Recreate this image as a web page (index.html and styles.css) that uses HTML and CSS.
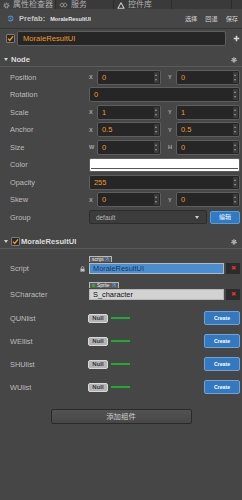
FILE: index.html
```html
<!DOCTYPE html>
<html lang="zh">
<head>
    <meta charset="UTF-8">
    <meta name="viewport" content="width=device-width, initial-scale=1.0">
    <title>属性检查器</title>
    <link rel="stylesheet" href="styles.css">
</head>
<body>
    <!-- 顶部面板标签 -->
    <div class="tabs">
        <div class="tab active">
            <svg width="7" height="7" viewBox="0 0 10 10"><circle cx="5" cy="5" r="3.3" fill="none" stroke="#9a9a9a" stroke-width="2" stroke-dasharray="1.4 1.2"/><circle cx="5" cy="5" r="2.2" fill="none" stroke="#9a9a9a" stroke-width="1.2"/></svg>
            <span>属性检查器</span>
        </div>
        <div class="tab">
            <svg width="9" height="6" viewBox="0 0 12 8"><path d="M4 1L1 4l3 3 3-3z M8 1L5 4l3 3 3-3z" fill="none" stroke="#9a9a9a" stroke-width="1.2"/></svg>
            <span>服务</span>
        </div>
        <div class="tab">
            <svg width="8" height="7" viewBox="0 0 10 9"><path d="M5 1L9 8H1z" fill="none" stroke="#c8c8c8" stroke-width="1.4" stroke-linejoin="round"/></svg>
            <span>控件库</span>
        </div>
        <div class="tab tab-last"></div>
    </div>

    <!-- Prefab 工具条 -->
    <div class="prefab-bar">
        <svg class="prefab-icon" width="7" height="7" viewBox="0 0 10 10"><circle cx="5" cy="5" r="3.4" fill="none" stroke="#4f8fd0" stroke-width="1.8" stroke-dasharray="8 2.5"/><circle cx="5" cy="5" r="1.2" fill="#4f8fd0"/></svg>
        <span class="prefab-label">Prefab:</span>
        <span class="prefab-name">MoraleResultUI</span>
        <div class="prefab-actions">
            <span>选择</span>
            <span>回退</span>
            <span>保存</span>
        </div>
    </div>

    <!-- 节点名称 -->
    <div class="name-row">
        <div class="checkbox"><svg width="7" height="7" viewBox="0 0 10 10"><path d="M1.5 5.2l2.4 2.6L8.6 2" fill="none" stroke="#f39a26" stroke-width="2"/></svg></div>
        <div class="name-input">MoraleResultUI</div>
        <svg class="plus" width="7" height="7" viewBox="0 0 10 10"><path d="M5 1v8M1 5h8" stroke="#d8d8d8" stroke-width="2.2"/></svg>
    </div>

    <!-- Node 属性 -->
    <div class="section-head node-head">
        <span class="caret"></span>
        <span class="section-title">Node</span>
        <svg class="gear" width="6" height="6" viewBox="0 0 10 10"><circle cx="5" cy="5" r="3.4" fill="none" stroke="#cfcfcf" stroke-width="2.2" stroke-dasharray="1.5 1.2"/><circle cx="5" cy="5" r="2.3" fill="#cfcfcf"/><circle cx="5" cy="5" r="1" fill="#464646"/></svg>
    </div>

    <div class="props">
        <div class="prop">
            <div class="prop-label">Position</div>
            <div class="prop-value">
                <div class="pair"><span class="axis">X</span><div class="num"><span>0</span><i class="spin"></i></div></div>
                <div class="pair"><span class="axis">Y</span><div class="num"><span>0</span><i class="spin"></i></div></div>
            </div>
        </div>
        <div class="prop">
            <div class="prop-label">Rotation</div>
            <div class="prop-value">
                <div class="num wide"><span>0</span><i class="spin"></i></div>
            </div>
        </div>
        <div class="prop">
            <div class="prop-label">Scale</div>
            <div class="prop-value">
                <div class="pair"><span class="axis">X</span><div class="num"><span>1</span><i class="spin"></i></div></div>
                <div class="pair"><span class="axis">Y</span><div class="num"><span>1</span><i class="spin"></i></div></div>
            </div>
        </div>
        <div class="prop">
            <div class="prop-label">Anchor</div>
            <div class="prop-value">
                <div class="pair"><span class="axis">X</span><div class="num"><span>0.5</span><i class="spin"></i></div></div>
                <div class="pair"><span class="axis">Y</span><div class="num"><span>0.5</span><i class="spin"></i></div></div>
            </div>
        </div>
        <div class="prop">
            <div class="prop-label">Size</div>
            <div class="prop-value">
                <div class="pair"><span class="axis">W</span><div class="num"><span>0</span><i class="spin"></i></div></div>
                <div class="pair"><span class="axis">H</span><div class="num"><span>0</span><i class="spin"></i></div></div>
            </div>
        </div>
        <div class="prop">
            <div class="prop-label">Color</div>
            <div class="prop-value">
                <div class="color-box"><div class="color-alpha"></div></div>
            </div>
        </div>
        <div class="prop">
            <div class="prop-label">Opacity</div>
            <div class="prop-value">
                <div class="num wide"><span>255</span><i class="spin"></i></div>
            </div>
        </div>
        <div class="prop">
            <div class="prop-label">Skew</div>
            <div class="prop-value">
                <div class="pair"><span class="axis">X</span><div class="num"><span>0</span><i class="spin"></i></div></div>
                <div class="pair"><span class="axis">Y</span><div class="num"><span>0</span><i class="spin"></i></div></div>
            </div>
        </div>
        <div class="prop">
            <div class="prop-label">Group</div>
            <div class="prop-value">
                <div class="select"><span>default</span><i class="select-caret"></i></div>
                <div class="edit-btn">编辑</div>
            </div>
        </div>
    </div>

    <!-- 组件 -->
    <div class="section-head comp-head">
        <span class="caret"></span>
        <div class="checkbox small"><svg width="7" height="7" viewBox="0 0 10 10"><path d="M1.5 5.2l2.4 2.6L8.6 2" fill="none" stroke="#f39a26" stroke-width="2"/></svg></div>
        <span class="section-title">MoraleResultUI</span>
        <svg class="gear" width="6" height="6" viewBox="0 0 10 10"><circle cx="5" cy="5" r="3.4" fill="none" stroke="#cfcfcf" stroke-width="2.2" stroke-dasharray="1.5 1.2"/><circle cx="5" cy="5" r="2.3" fill="#cfcfcf"/><circle cx="5" cy="5" r="1" fill="#464646"/></svg>
    </div>

    <div class="obj-row first">
        <div class="prop-label obj-label">
            <span>Script</span>
            <svg class="lock" width="5" height="6" viewBox="0 0 6 7"><path d="M1.5 3V2a1.5 1.5 0 0 1 3 0v1" fill="none" stroke="#bdbdbd" stroke-width="0.9"/><rect x="0.5" y="3" width="5" height="3.6" fill="#bdbdbd"/></svg>
        </div>
        <div class="obj-value">
            <div class="obj-tag">script<svg width="5" height="5" viewBox="0 0 6 6"><path d="M1 1h4v4M5 1L1.5 4.5" fill="none" stroke="#5aa0e6" stroke-width="1"/></svg></div>
            <div class="obj-line">
                <div class="obj-field script">MoraleResultUI</div>
                <div class="clear-btn">✖</div>
            </div>
        </div>
    </div>

    <div class="obj-row">
        <div class="prop-label obj-label"><span>SCharacter</span></div>
        <div class="obj-value">
            <div class="obj-tag"><i class="sprite-dot"></i>Sprite<svg width="5" height="5" viewBox="0 0 6 6"><path d="M1 1h4v4M5 1L1.5 4.5" fill="none" stroke="#5aa0e6" stroke-width="1"/></svg></div>
            <div class="obj-line">
                <div class="obj-field sprite">S_character</div>
                <div class="clear-btn">✖</div>
            </div>
        </div>
    </div>

    <div class="lists">
        <div class="list-row">
            <div class="prop-label">QUNlist</div>
            <span class="null-badge">Null</span><i class="null-line"></i>
            <div class="create-btn">Create</div>
        </div>
        <div class="list-row">
            <div class="prop-label">WEllist</div>
            <span class="null-badge">Null</span><i class="null-line"></i>
            <div class="create-btn">Create</div>
        </div>
        <div class="list-row">
            <div class="prop-label">SHUlist</div>
            <span class="null-badge">Null</span><i class="null-line"></i>
            <div class="create-btn">Create</div>
        </div>
        <div class="list-row">
            <div class="prop-label">WUlist</div>
            <span class="null-badge">Null</span><i class="null-line"></i>
            <div class="create-btn">Create</div>
        </div>
    </div>

    <div class="add-wrap">
        <div class="add-btn">添加组件</div>
    </div>
</body>
</html>
```

FILE: styles.css
```css
* {
    margin: 0;
    padding: 0;
    box-sizing: border-box;
}

body {
    width: 242px;
    height: 500px;
    overflow: hidden;
    background-color: #464646;
    color: #bdbdbd;
    font-family: 'Liberation Sans', 'Noto Sans CJK SC', sans-serif;
    font-size: 7.4px;
}

/* 顶部标签 */
.tabs {
    display: flex;
    height: 9px;
    background-color: #3a3a3a;
    overflow: hidden;
}

.tab {
    width: 58px;
    display: flex;
    align-items: flex-start;
    gap: 3px;
    padding: 1px 0 0 3px;
    border-right: 1px solid #2c2c2c;
    font-size: 8px;
    line-height: 8px;
    color: #b0b0b0;
}

.tab svg {
    margin-top: 1px;
}

.tab.active {
    width: 56px;
    background-color: #404040;
}

.tab-last {
    width: 60px;
}

/* Prefab 工具条 */
.prefab-bar {
    display: flex;
    align-items: center;
    height: 20px;
    padding: 0 4px 0 7px;
    border-bottom: 1px solid #363636;
}

.prefab-icon {
    margin-right: 5px;
}

.prefab-label {
    font-weight: bold;
    font-size: 7.6px;
    color: #c2c2c2;
}

.prefab-name {
    margin-left: 5px;
    font-size: 5.6px;
    font-weight: bold;
    color: #e6e6e6;
}

.prefab-actions {
    margin-left: auto;
    display: flex;
    gap: 8px;
    font-size: 6.2px;
    color: #d0d0d0;
}

/* 节点名称 */
.name-row {
    display: flex;
    align-items: center;
    height: 15px;
    margin-top: 2px;
    padding-left: 6px;
}

.checkbox {
    width: 9px;
    height: 9px;
    display: flex;
    align-items: center;
    justify-content: center;
    background-color: #2a2a2a;
    border: 1px solid #7a7a7a;
    border-radius: 1px;
}

.name-input {
    width: 209px;
    height: 15px;
    margin-left: 2px;
    padding-left: 5px;
    line-height: 13px;
    background-color: #262626;
    border: 1px solid #5e5e5e;
    border-radius: 2px;
    color: #f39a26;
    font-size: 7.6px;
}

.plus {
    margin-left: 7px;
}

/* 区块标题 */
.section-head {
    display: flex;
    align-items: center;
    height: 14px;
    padding: 0 5px 0 4px;
    border-bottom: 1px solid #5a5a5a;
}

.node-head {
    margin-top: 7px;
}

.comp-head {
    margin-top: 9px;
}

.caret {
    width: 0;
    height: 0;
    margin-right: 3px;
    border-left: 2px solid transparent;
    border-right: 2px solid transparent;
    border-top: 3px solid #d0d0d0;
}

.section-title {
    font-weight: bold;
    font-size: 7.6px;
    color: #dcdcdc;
}

.checkbox.small {
    width: 9px;
    height: 9px;
    margin-right: 1px;
}

.gear {
    margin-left: auto;
}

/* 属性行 */
.props {
    padding-top: 1.5px;
}

.prop {
    display: flex;
    align-items: center;
    height: 17.5px;
    padding: 0 2px 0 10px;
}

.prop-label {
    width: 79px;
    flex-shrink: 0;
}

.prop-value {
    display: flex;
    flex: 1;
    align-items: center;
    justify-content: space-between;
}

.pair {
    display: flex;
    align-items: center;
    width: 72px;
}

.axis {
    width: 8px;
    font-size: 5.6px;
    font-weight: bold;
    color: #a8a8a8;
}

.num {
    position: relative;
    display: flex;
    align-items: center;
    flex: 1;
    height: 15px;
    padding-left: 4px;
    background-color: #262626;
    border: 1px solid #5e5e5e;
    border-radius: 2px;
    color: #f39a26;
}

.num.wide {
    width: 151px;
}

.spin {
    position: absolute;
    top: 1px;
    right: 1px;
    bottom: 1px;
    width: 5px;
    background-color: #3a3a3a;
}

.spin::before,
.spin::after {
    content: '';
    position: absolute;
    left: 1px;
    border-left: 1.5px solid transparent;
    border-right: 1.5px solid transparent;
}

.spin::before {
    top: 2px;
    border-bottom: 2px solid #9a9a9a;
}

.spin::after {
    bottom: 2px;
    border-top: 2px solid #9a9a9a;
}

.color-box {
    width: 151px;
    height: 14px;
    padding: 1px;
    background-color: #ffffff;
    border: 1px solid #5e5e5e;
    border-radius: 2px;
    display: flex;
    align-items: flex-end;
}

.color-alpha {
    width: 100%;
    height: 2px;
    border-top: 1px solid #555;
    background-color: #ffffff;
}

.select {
    display: flex;
    align-items: center;
    justify-content: space-between;
    width: 118px;
    height: 14px;
    padding: 0 7px 0 6px;
    background-color: #3c3c3c;
    border: 1px solid #2c2c2c;
    border-radius: 2px;
    color: #b8b8b8;
    font-size: 6.4px;
}

.select-caret {
    border-left: 2.5px solid transparent;
    border-right: 2.5px solid transparent;
    border-top: 3px solid #cfcfcf;
}

.edit-btn {
    width: 30px;
    height: 13px;
    line-height: 11px;
    text-align: center;
    background-color: #2e7ac4;
    border: 1px solid #5d9ad4;
    border-radius: 2px;
    color: #ffffff;
    font-size: 6px;
}

/* 引用字段 */
.obj-row {
    display: flex;
    align-items: flex-end;
    padding: 0 2px 0 10px;
    margin-top: 6px;
}

.obj-row.first {
    margin-top: 5px;
}

.obj-label {
    display: flex;
    align-items: center;
    justify-content: space-between;
    height: 11px;
    padding-right: 4px;
}

.obj-value {
    width: 151px;
}

.obj-tag {
    display: inline-flex;
    align-items: center;
    gap: 1px;
    height: 6px;
    padding: 0 2px;
    background-color: #5c5c5c;
    border: 1px solid #b8b8b8;
    border-bottom: none;
    border-radius: 1px 1px 0 0;
    color: #f0f0f0;
    font-size: 4.8px;
    line-height: 5px;
}

.sprite-dot {
    width: 3px;
    height: 3px;
    margin-right: 1px;
    background-color: #23b023;
}

.obj-line {
    display: flex;
    align-items: center;
    height: 11px;
}

.obj-field {
    flex: 1;
    height: 11px;
    padding-left: 3px;
    line-height: 9px;
    border: 1px solid #b8b8b8;
    font-size: 7.4px;
}

.obj-field.script {
    background-color: #4a8ed2;
    color: #16375f;
}

.obj-field.sprite {
    background-color: #d2d2d2;
    color: #111111;
}

.clear-btn {
    width: 14px;
    height: 11px;
    margin-left: 2px;
    line-height: 11px;
    text-align: center;
    background-color: #2c2c2c;
    color: #e03434;
    font-size: 6px;
}

/* 列表行 */
.lists {
    display: flex;
    flex-direction: column;
    gap: 9px;
    margin-top: 11px;
    padding: 0 2px 0 10px;
}

.list-row {
    display: flex;
    align-items: center;
    height: 14px;
}

.list-row .prop-label {
    width: 78px;
}

.null-badge {
    width: 20px;
    height: 9px;
    line-height: 7px;
    text-align: center;
    background-color: #b4b4b4;
    border: 1px solid #d8d8d8;
    border-radius: 2px;
    color: #3a3a3a;
    font-size: 6px;
    font-weight: bold;
}

.null-line {
    width: 19px;
    height: 2px;
    margin-left: 3px;
    background-color: #22a832;
}

.create-btn {
    margin-left: auto;
    width: 36px;
    height: 14px;
    line-height: 12px;
    text-align: center;
    background-color: #3479c0;
    border: 1px solid #6ca3d8;
    border-radius: 2px;
    color: #ffffff;
    font-size: 5.2px;
    font-weight: bold;
}

/* 添加组件 */
.add-wrap {
    display: flex;
    justify-content: center;
    margin-top: 15px;
}

.add-btn {
    width: 141px;
    height: 15px;
    line-height: 13px;
    text-align: center;
    background: linear-gradient(#525252, #474747);
    border: 1px solid #2a2a2a;
    border-radius: 2px;
    color: #cfcfcf;
    font-size: 7.4px;
}
```
